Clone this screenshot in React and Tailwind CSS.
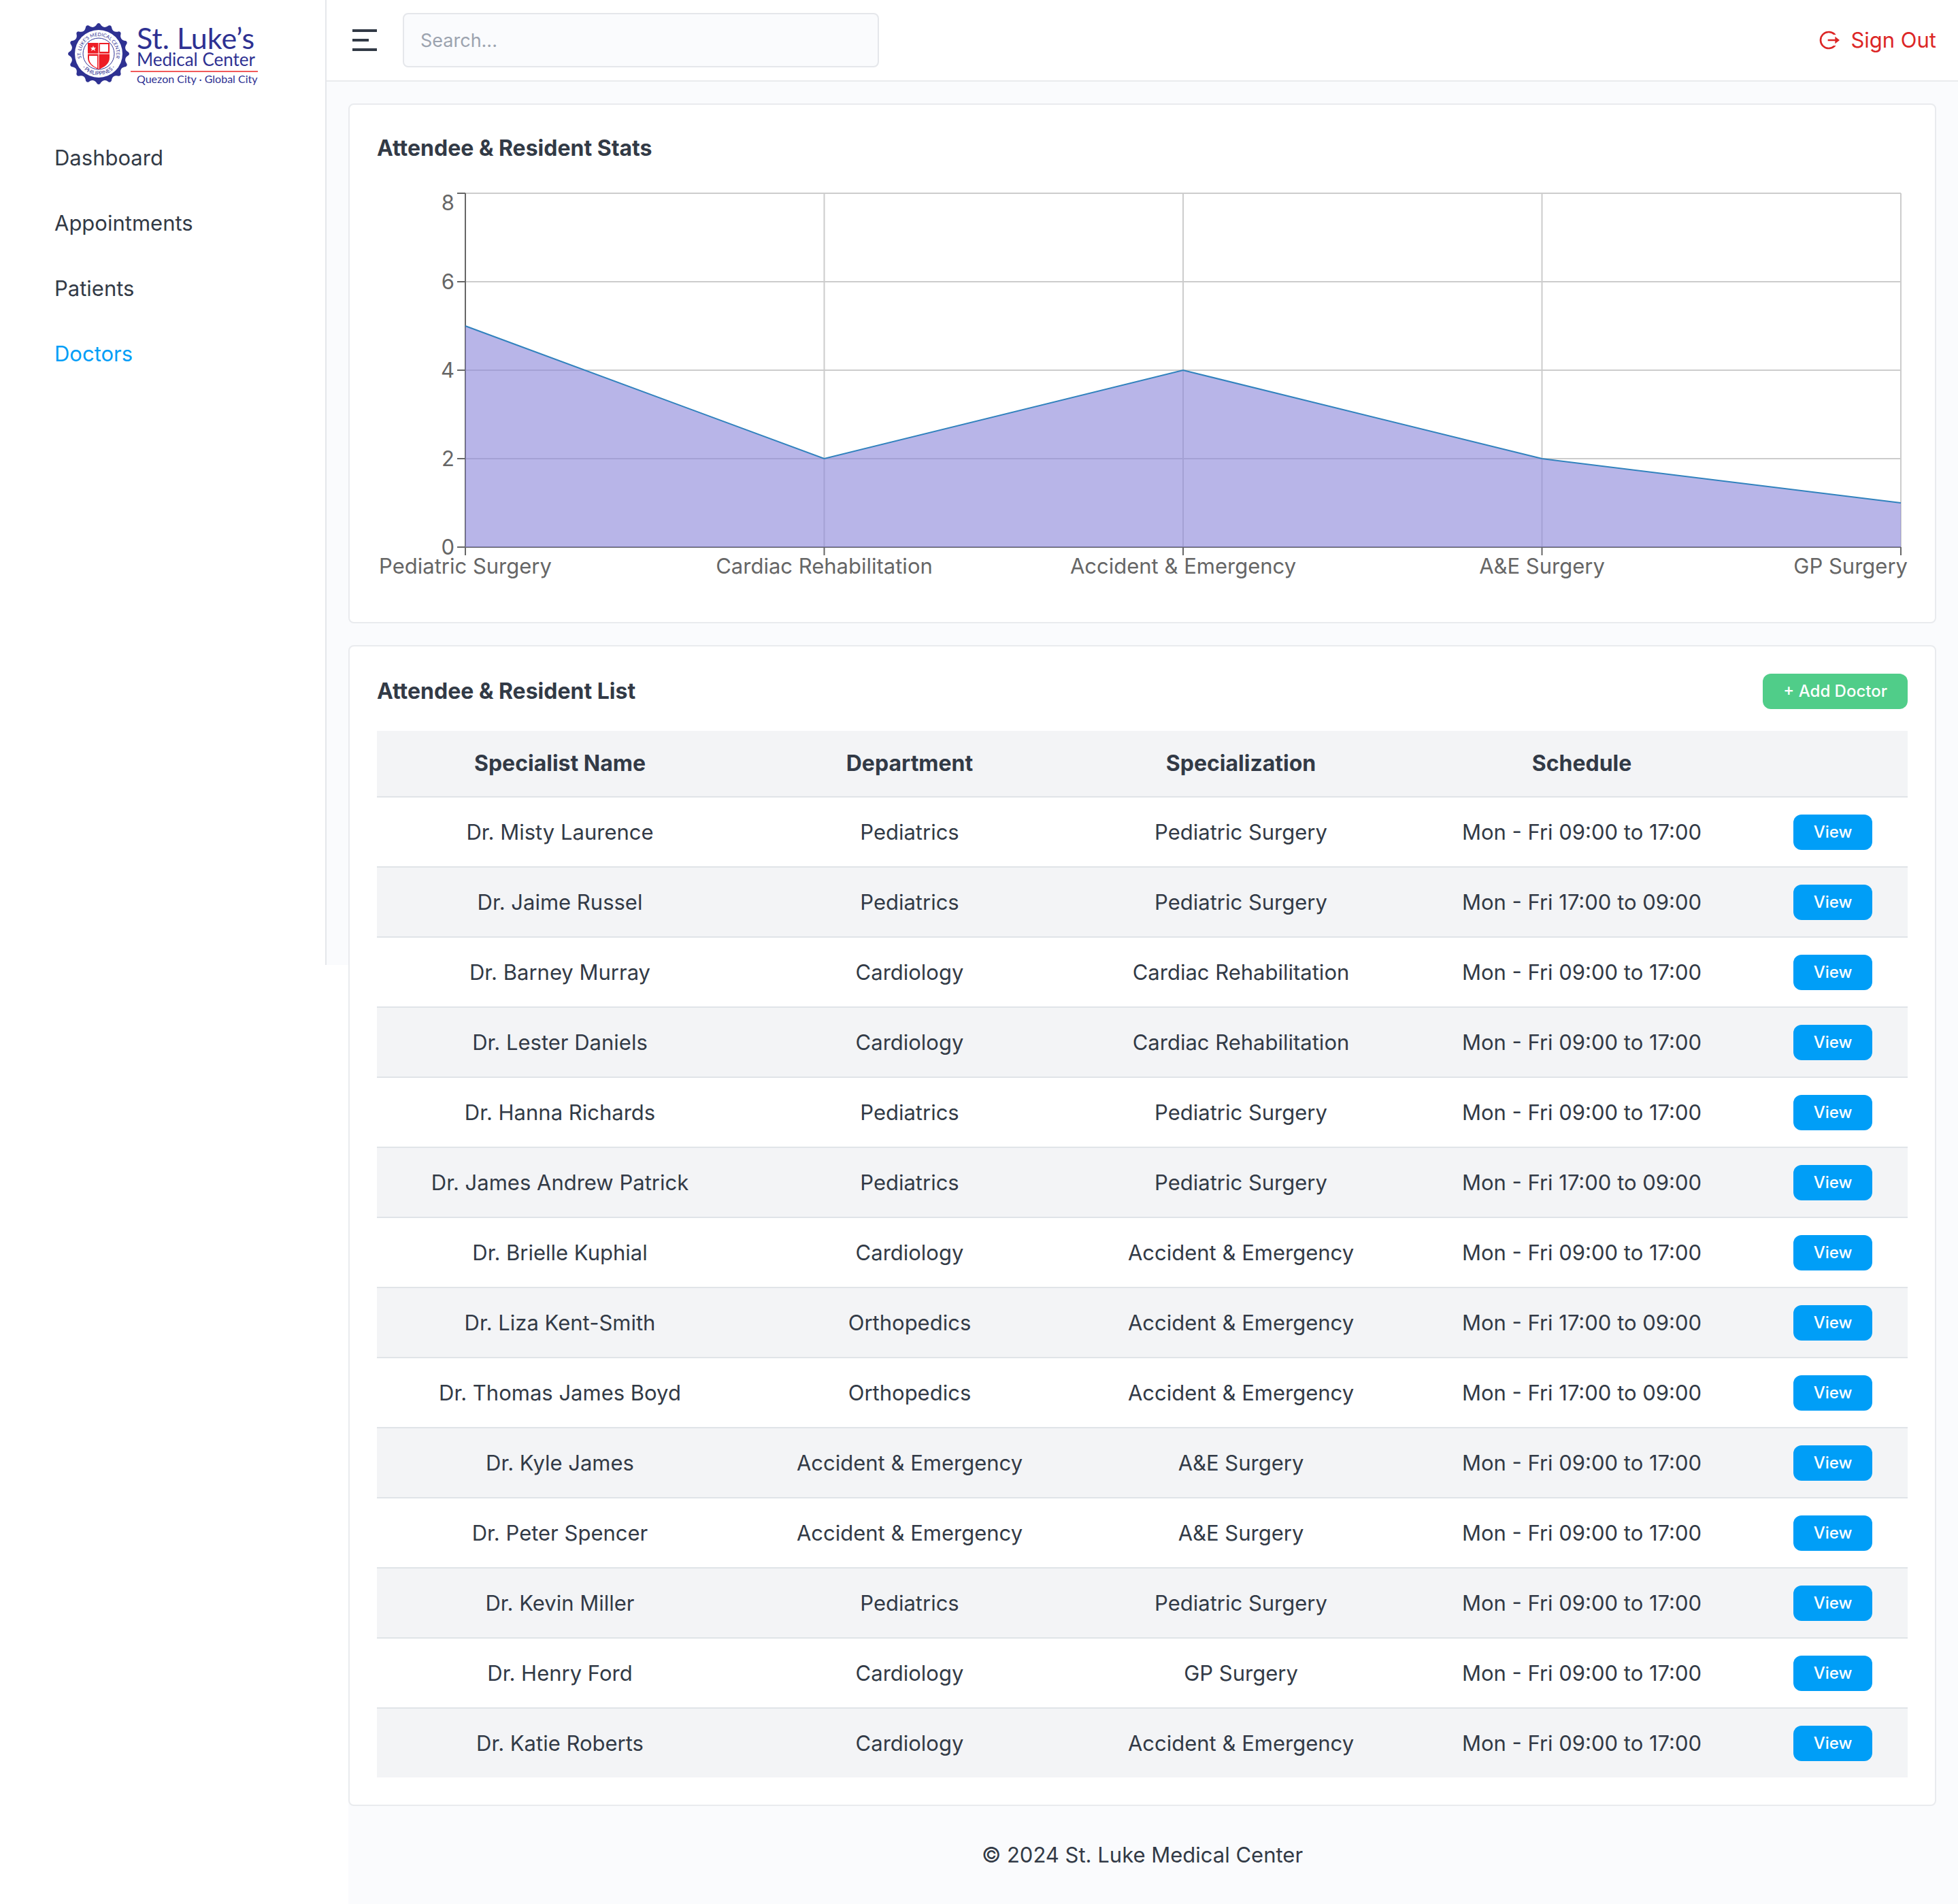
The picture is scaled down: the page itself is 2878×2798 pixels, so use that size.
import { useLayoutEffect, useRef, useState } from "react";
import { RiMenu2Line } from "react-icons/ri";

const NAV = ["Dashboard", "Appointments", "Patients", "Doctors"];

const STATS = [
  { name: "Pediatric Surgery", value: 5 },
  { name: "Cardiac Rehabilitation", value: 2 },
  { name: "Accident & Emergency", value: 4 },
  { name: "A&E Surgery", value: 2 },
  { name: "GP Surgery", value: 1 },
];

const DAY = "Mon - Fri 09:00 to 17:00";
const NIGHT = "Mon - Fri 17:00 to 09:00";

const DOCTORS = [
  ["Dr. Misty Laurence", "Pediatrics", "Pediatric Surgery", DAY],
  ["Dr. Jaime Russel", "Pediatrics", "Pediatric Surgery", NIGHT],
  ["Dr. Barney Murray", "Cardiology", "Cardiac Rehabilitation", DAY],
  ["Dr. Lester Daniels", "Cardiology", "Cardiac Rehabilitation", DAY],
  ["Dr. Hanna Richards", "Pediatrics", "Pediatric Surgery", DAY],
  ["Dr. James Andrew Patrick", "Pediatrics", "Pediatric Surgery", NIGHT],
  ["Dr. Brielle Kuphial", "Cardiology", "Accident & Emergency", DAY],
  ["Dr. Liza Kent-Smith", "Orthopedics", "Accident & Emergency", NIGHT],
  ["Dr. Thomas James Boyd", "Orthopedics", "Accident & Emergency", NIGHT],
  ["Dr. Kyle James", "Accident & Emergency", "A&E Surgery", DAY],
  ["Dr. Peter Spencer", "Accident & Emergency", "A&E Surgery", DAY],
  ["Dr. Kevin Miller", "Pediatrics", "Pediatric Surgery", DAY],
  ["Dr. Henry Ford", "Cardiology", "GP Surgery", DAY],
  ["Dr. Katie Roberts", "Cardiology", "Accident & Emergency", DAY],
];

function sealOutline(cx, cy, outer, inner, count) {
  const point = (r, a) => `${(cx + r * Math.sin(a)).toFixed(2)} ${(cy - r * Math.cos(a)).toFixed(2)}`;
  const step = (2 * Math.PI) / count;
  const shoulder = outer - 1;
  let d = `M${point(shoulder, -step * 0.13)}`;
  for (let i = 0; i < count; i++) {
    const a = i * step;
    d += `Q${point(outer + 1, a)} ${point(shoulder, a + step * 0.13)}`;
    d += `Q${point(inner, a + step * 0.3)} ${point(inner, a + step * 0.5)}`;
    d += `Q${point(inner, a + step * 0.7)} ${point(shoulder, a + step * 0.87)}`;
  }
  return d + "Z";
}

function Logo() {
  return (
    <svg viewBox="0 -8 280 104" className="h-[104px] w-[280px]" role="img" aria-label="St. Luke's Medical Center">
      <path d={sealOutline(46, 47, 45, 40, 16)} fill="#2e3192" />
      <circle cx="46" cy="47" r="35" fill="#fff" />
      <circle cx="46" cy="47" r="23" fill="none" stroke="#2e3192" strokeWidth="1" />
      <path d="M30 31h32v22c0 9-8 14-16 17c-8-3-16-8-16-17z" fill="#ed1c24" />
      <path d="M48 33h12v11H48zM32 50h12v18C37 65 32 60 32 54z" fill="#fff" />
      <path d="M46 31v38M30 47h32" stroke="#fff" strokeWidth="1" />
      <path d="M38 35l1 3h3l-2 2 1 3-3-2-3 2 1-3-2-2h3z" fill="#fff" />
      <path id="seal-top" d="M27.6 65.4A26 26 0 1 1 64.4 65.4" fill="none" />
      <path id="seal-bottom" d="M14.5 47A31.5 31.5 0 0 0 77.5 47" fill="none" />
      <g fill="#2e3192" fontFamily="Lato, sans-serif" textAnchor="middle">
        <text fontSize="7">
          <textPath href="#seal-top" startOffset="50%">ST. LUKE’S MEDICAL CENTER</textPath>
        </text>
        <text fontSize="8">
          <textPath href="#seal-bottom" startOffset="50%">· PHILIPPINES ·</textPath>
        </text>
      </g>
      <g fill="#2e3192" fontFamily="Lato, sans-serif">
        <text x="102" y="40" fontSize="43">St. Luke’s</text>
        <text x="102" y="65" fontSize="26">Medical Center</text>
        <text x="102" y="90" fontSize="16">Quezon City · Global City</text>
      </g>
      <path d="M93 73h187" stroke="#f15a5a" strokeWidth="2" />
    </svg>
  );
}

function SignOutIcon() {
  return (
    <svg viewBox="0 0 24 24" className="size-8" fill="currentColor" aria-hidden="true">
      <path d="M19 11H11V13H19V16L24 12L19 8Z" />
      <path d="M20 18H17.29A8 8 0 1 1 17.29 6H20A10 10 0 1 0 20 18Z" />
    </svg>
  );
}

function AreaChart({ data }) {
  const ref = useRef(null);
  const [width, setWidth] = useState(0);

  useLayoutEffect(() => {
    const node = ref.current;
    const measure = () => setWidth(node.clientWidth);
    measure();
    const observer = new ResizeObserver(measure);
    observer.observe(node);
    return () => observer.disconnect();
  }, []);

  const left = 130;
  const right = width - 10;
  const top = 10;
  const bottom = 530;
  const x = (i) => left + ((right - left) * i) / (data.length - 1);
  const y = (v) => bottom - ((bottom - top) * v) / 8;
  const line = data.map((d, i) => `${x(i)},${y(d.value)}`).join(" L");
  const ticks = [0, 2, 4, 6, 8];

  return (
    <div ref={ref} className="h-[600px] w-full">
      {width > 0 && (
        <svg width={width} height="600" className="block overflow-visible" role="img" aria-label="Doctors per specialization">
          <g stroke="#ccc" strokeWidth="2">
            {ticks.map((t) => (
              <line key={t} x1={left} x2={right} y1={y(t)} y2={y(t)} />
            ))}
            {data.map((d, i) => (
              <line key={d.name} x1={x(i)} x2={x(i)} y1={top} y2={bottom} />
            ))}
          </g>
          <g stroke="#666" strokeWidth="2">
            <path d={`M${left} ${top}V${bottom}H${right}`} fill="none" />
            {ticks.map((t) => (
              <line key={t} x1={left - 12} x2={left} y1={y(t)} y2={y(t)} />
            ))}
            {data.map((d, i) => (
              <line key={d.name} x1={x(i)} x2={x(i)} y1={bottom} y2={bottom + 12} />
            ))}
          </g>
          <path d={`M${line} L${right},${bottom} L${left},${bottom}Z`} fill="#8884d8" fillOpacity="0.6" />
          <path d={`M${line}`} fill="none" stroke="#3182bd" strokeWidth="2" />
          <g fill="#666">
            {ticks.map((t) => (
              <text key={t} x={left - 16} y={(t === 8 ? 24 : y(t)) + 11} textAnchor="end">
                {t}
              </text>
            ))}
            {data.map((d, i) => {
              const last = i === data.length - 1;
              return (
                <text key={d.name} x={last ? width : x(i)} y={bottom + 39} textAnchor={last ? "end" : "middle"}>
                  {d.name}
                </text>
              );
            })}
          </g>
        </svg>
      )}
    </div>
  );
}

function Card({ children }) {
  return <section className="rounded-lg border-2 border-[#e9ebee] bg-white p-10">{children}</section>;
}

export default function App() {
  return (
    <div className="flex min-h-screen items-start bg-white font-[Inter,sans-serif] text-[31px] leading-[48px] text-[#323a46]">
      <aside className="h-[1418px] w-[480px] shrink-0 border-r-2 border-[#e5e7eb] pt-6">
        <div className="flex justify-center">
          <Logo />
        </div>
        <nav className="mt-14 flex flex-col px-20">
          {NAV.map((item) => (
            <a key={item} href="#" className={item === "Doctors" ? "py-6 text-[#009ef7]" : "py-6"}>
              {item}
            </a>
          ))}
        </nav>
      </aside>

      <div className="min-w-0 flex-1">
        <header className="flex h-[120px] items-center gap-8 border-b-2 border-[#e9ebee] px-8">
          <button type="button" aria-label="Toggle menu">
            <RiMenu2Line className="size-12" />
          </button>
          <input
            type="search"
            aria-label="Search"
            placeholder="Search..."
            className="h-20 w-[700px] rounded-lg border-2 border-[#e5e7eb] bg-[#fafbfd] px-6 text-[27px] placeholder:text-[#9ca3af]"
          />
          <a href="#" className="ml-auto flex items-center gap-4 text-[#dc2626]">
            <SignOutIcon />
            Sign Out
          </a>
        </header>

        <div className="flex items-start">
          <div className="h-[1298px] w-8 shrink-0 bg-[#fafbfd]" />
          <div className="min-w-0 flex-1 bg-[#fafbfd] pt-8 pr-8">
            <main className="flex flex-col gap-8">
              <Card>
                <h2 className="mb-8 text-[32px] leading-[48px] font-bold">Attendee &amp; Resident Stats</h2>
                <AreaChart data={STATS} />
              </Card>

              <Card>
                <div className="mb-8 flex items-center justify-between">
                  <h2 className="text-[32px] leading-[48px] font-bold">Attendee &amp; Resident List</h2>
                  <button
                    type="button"
                    className="rounded-xl bg-[#50cd89] px-[30px] py-2 text-[24px] leading-[36px] font-medium text-white"
                  >
                    + Add Doctor
                  </button>
                </div>
                <table className="w-full table-fixed text-center">
                  <colgroup>
                    <col className="w-[538px]" />
                    <col className="w-[490px]" />
                    <col className="w-[484px]" />
                    <col className="w-[518px]" />
                    <col className="w-[220px]" />
                  </colgroup>
                  <thead className="text-[32px] leading-[48px]">
                    <tr className="h-[97px] border-b-2 border-[#e0e4e8] bg-[#f3f4f6]">
                      <th className="font-bold">Specialist Name</th>
                      <th className="font-bold">Department</th>
                      <th className="font-bold">Specialization</th>
                      <th className="font-bold">Schedule</th>
                      <th aria-label="Actions" />
                    </tr>
                  </thead>
                  <tbody>
                    {DOCTORS.map(([name, department, specialization, schedule]) => (
                      <tr
                        key={name}
                        className="h-[103px] border-b-2 border-[#e0e4e8] last:h-[102px] last:border-b-0 even:bg-[#f3f4f6]"
                      >
                        <td>{name}</td>
                        <td>{department}</td>
                        <td>{specialization}</td>
                        <td>{schedule}</td>
                        <td>
                          <button
                            type="button"
                            aria-label={`View ${name}`}
                            className="mx-auto block rounded-xl bg-[#009ef7] px-[30px] py-2 text-[24px] leading-[36px] font-medium text-white"
                          >
                            View
                          </button>
                        </td>
                      </tr>
                    ))}
                  </tbody>
                </table>
              </Card>
            </main>
            <footer className="py-12 text-center">© 2024 St. Luke Medical Center</footer>
          </div>
        </div>
      </div>
    </div>
  );
}
